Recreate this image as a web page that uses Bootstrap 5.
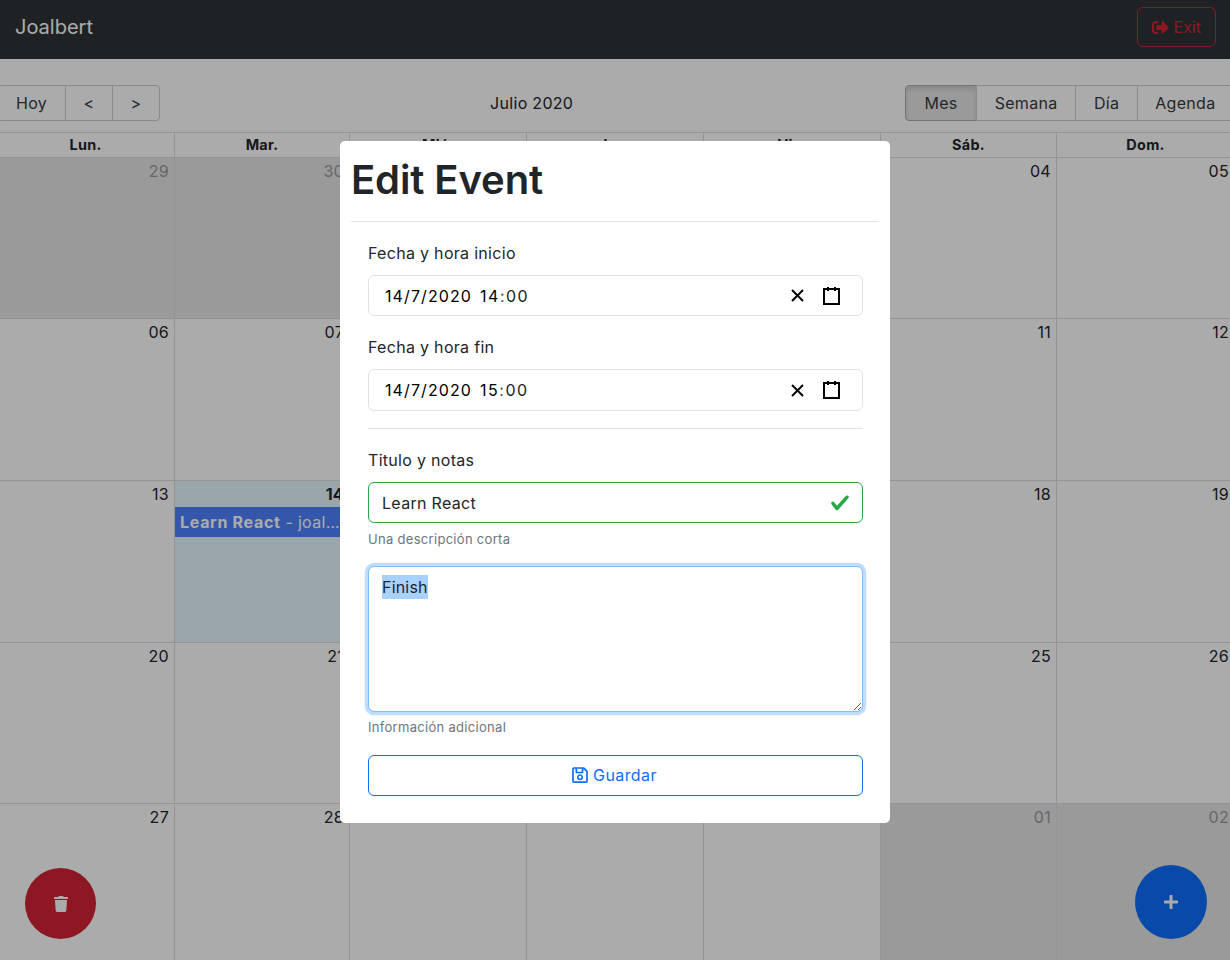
<!DOCTYPE html>
<html lang="es">
<head>
  <meta charset="UTF-8" />
  <meta name="viewport" content="width=device-width, initial-scale=1" />
  <title>Joalbert Calendar</title>
  <link href="https://cdn.jsdelivr.net/npm/bootstrap@5.3.0/dist/css/bootstrap.min.css" rel="stylesheet" />
  <style>
    html, body { height: 100%; overflow: hidden; }
    body { font-family: Inter, "Liberation Sans", sans-serif; font-size: 16px; letter-spacing: .3px; color: #212529; background: #fff; }

    /* top bar */
    .app-bar { height: 59px; background: #2e3338; padding: 7px 14px 12px 15px; }
    .app-brand { font-size: 20px; line-height: 40px; color: #fff; letter-spacing: 0; }
    .exit-btn { width: 79px; height: 40px; padding: 0; color: #d32535; border-color: #d32535; font-size: 16px; }
    .exit-btn svg { width: 17px; height: 17px; fill: currentColor; vertical-align: -3px; }

    /* calendar */
    .cal-shell { margin: 0 -4px 0 -3px; }
    .cal-toolbar { height: 73px; padding: 26px 0 11px 0; }
    .cal-label { color: #212529; padding-right: 2px; }
    .tool-group { display: flex; }
    .tool-btn { height: 36px; padding: 0 17.5px; border: 1px solid #ccc; margin-left: -1px; color: #373a3c; line-height: 34px; background: #fff; }
    .tool-btn:first-child { border-radius: 4px 0 0 4px; margin-left: 0; }
    .tool-btn:last-child { border-radius: 0 4px 4px 0; }
    .tool-btn.today-btn, .tool-btn.wide-btn { padding: 0 18px; }
    .tool-btn.is-on { background: #e6e6e6; border-color: #adadad; box-shadow: inset 0 3px 5px rgba(0,0,0,.125); }
    .cal-grid { border-top: 1px solid #ddd; }
    .cal-head, .cal-week { display: grid; grid-template-columns: 177px 175px 177px 177px 177px 176px 1fr; }
    .cal-head > div { height: 25px; line-height: 24px; font-size: 14.4px; font-weight: 700; text-align: center; border-bottom: 1px solid #ddd; border-left: 1px solid #ddd; }
    .cal-head > div:first-child, .cal-day:first-child { border-left: 0; }
    .cal-week { height: 162px; border-bottom: 1px solid #ddd; }
    .cal-week:nth-child(2), .cal-week:nth-child(5) { height: 161px; }
    .cal-day { border-left: 1px solid #ddd; padding: 1px 5px 0 0; text-align: right; min-width: 0; }
    .cal-day.off { background: #e6e6e6; color: #999; }
    .cal-day.today { background: #e8f8ff; font-weight: 700; }
    .cal-event { margin: 1px -2px 0 0; padding: 3px 5px; height: 30px; background: #4f82ff; color: #fff; text-align: left; font-weight: 400; white-space: nowrap; overflow: hidden; text-overflow: ellipsis; }
    .cal-event strong { letter-spacing: .7px; }

    /* floating buttons */
    .fab-btn { width: 72px; height: 72px; border-radius: 50%; border: 0; color: #fff; z-index: 5; }
    .fab-del { left: 25px; bottom: 21px; background: #d32535; width: 71px; height: 71px; }
    .fab-add { right: 23px; bottom: 21px; background: #0d6efd; height: 74px; }
    .fab-btn svg { width: 14px; height: 16px; fill: currentColor; }

    /* modal */
    .dim-layer { background: rgba(0,0,0,.33); padding-top: 4px; z-index: 10; }
    .edit-box { width: 550px; height: 682px; background: #fff; border-radius: 5px; padding: 11px; }
    .edit-box h1 { font-size: 40px; font-weight: 600; letter-spacing: -.1px; line-height: 48px; margin: 4px 0 0; padding-bottom: 17px; border-bottom: 1px solid #e3e3e3; color: #212529; }
    .edit-form { padding: 19px 16px 0 17px; }
    .edit-form label { display: block; line-height: 24px; margin-bottom: 10px; }
    .date-field { height: 41px; padding: 0 21px 0 16px; display: flex; align-items: center; justify-content: space-between; color: #000; letter-spacing: 1.1px; }
    .date-field .time-part { margin-left: 2px; letter-spacing: 1.5px; }
    .date-field .dim { color: #555; }
    .date-field .min-part { color: #222; }
    .date-tools { display: flex; align-items: center; gap: 15px; }
    .date-tools svg { display: block; stroke: #000; stroke-width: 2; fill: none; }
    .gap-field { margin-top: 19px; }
    .second-date { height: 42px; }
    .form-rule { border-top: 1px solid #e3e3e3; margin: 17px 0 19px; }
    .form-control.title-ok { height: 41px; padding-left: 13px; border-color: #28a745; color: #212529; letter-spacing: .3px;
      background-image: url("data:image/svg+xml,%3csvg xmlns='http://www.w3.org/2000/svg' viewBox='0 0 8 8'%3e%3cpath fill='%2328a745' d='M2.3 6.73L.6 4.53c-.4-1.04.46-1.4 1.1-.8l1.1 1.4 3.4-3.8c.6-.63 1.6-.27 1.2.7l-4 4.6c-.43.5-.8.4-1.1.1z'/%3e%3c/svg%3e");
      background-size: 20px 20px; background-position: right 12px center; background-repeat: no-repeat; }
    .hint-text { font-size: 13px; line-height: 19px; color: #6c757d; margin-top: 7px; }
    .note-area { height: 146px; margin-top: 17px; padding: 8px 13px; color: #000; letter-spacing: .2px; }
    .note-area:focus { border-color: #80bdff; box-shadow: 0 0 0 3.2px rgba(0,123,255,.25); }
    .note-area::selection { background: #a8d1ff; }
    .note-hint { margin-top: 6px; }
    .save-btn { height: 41px; margin-top: 18px; padding: 0 2px 2px 0; letter-spacing: .4px; }
    .save-btn svg { width: 16px; height: 18px; fill: currentColor; vertical-align: -3px; }
  </style>
</head>
<body>
  <nav class="app-bar d-flex justify-content-between">
    <span class="app-brand">Joalbert</span>
    <button class="btn exit-btn">
      <svg viewBox="0 0 512 512"><path d="M497 273L329 441c-15 15-41 4.5-41-17v-96H152c-13.3 0-24-10.7-24-24v-96c0-13.3 10.7-24 24-24h136V88c0-21.4 25.9-32 41-17l168 168c9.3 9.4 9.3 24.6 0 34zM192 436v-40c0-6.6-5.4-12-12-12H96c-17.7 0-32-14.3-32-32V160c0-17.7 14.3-32 32-32h84c6.6 0 12-5.4 12-12V76c0-6.6-5.4-12-12-12H96c-53 0-96 43-96 96v192c0 53 43 96 96 96h84c6.6 0 12-5.4 12-12z"/></svg>
      Exit
    </button>
  </nav>

  <div class="cal-shell">
    <div class="cal-toolbar d-flex align-items-center">
      <div class="tool-group">
        <span class="tool-btn today-btn">Hoy</span>
        <span class="tool-btn">&lt;</span>
        <span class="tool-btn">&gt;</span>
      </div>
      <div class="cal-label flex-grow-1 text-center">Julio 2020</div>
      <div class="tool-group">
        <span class="tool-btn wide-btn is-on">Mes</span>
        <span class="tool-btn wide-btn">Semana</span>
        <span class="tool-btn">Día</span>
        <span class="tool-btn">Agenda</span>
      </div>
    </div>

    <div class="cal-grid">
      <div class="cal-head">
        <div>Lun.</div><div>Mar.</div><div>Mié.</div><div>Jue.</div><div>Vie.</div><div>Sáb.</div><div>Dom.</div>
      </div>
      <div class="cal-week">
        <div class="cal-day off">29</div><div class="cal-day off">30</div><div class="cal-day">01</div><div class="cal-day">02</div><div class="cal-day">03</div><div class="cal-day">04</div><div class="cal-day">05</div>
      </div>
      <div class="cal-week">
        <div class="cal-day">06</div><div class="cal-day">07</div><div class="cal-day">08</div><div class="cal-day">09</div><div class="cal-day">10</div><div class="cal-day">11</div><div class="cal-day">12</div>
      </div>
      <div class="cal-week">
        <div class="cal-day">13</div>
        <div class="cal-day today">14<div class="cal-event"><strong>Learn React</strong> - joalbert</div></div>
        <div class="cal-day">15</div><div class="cal-day">16</div><div class="cal-day">17</div><div class="cal-day">18</div><div class="cal-day">19</div>
      </div>
      <div class="cal-week">
        <div class="cal-day">20</div><div class="cal-day">21</div><div class="cal-day">22</div><div class="cal-day">23</div><div class="cal-day">24</div><div class="cal-day">25</div><div class="cal-day">26</div>
      </div>
      <div class="cal-week">
        <div class="cal-day">27</div><div class="cal-day">28</div><div class="cal-day">29</div><div class="cal-day">30</div><div class="cal-day">31</div><div class="cal-day off">01</div><div class="cal-day off">02</div>
      </div>
    </div>
  </div>

  <button class="fab-btn fab-del position-fixed d-flex align-items-center justify-content-center">
    <svg viewBox="0 0 448 512"><path d="M432 32H312l-9.4-18.7A24 24 0 0 0 281.1 0H166.8a23.72 23.72 0 0 0-21.4 13.3L136 32H16A16 16 0 0 0 0 48v32a16 16 0 0 0 16 16h416a16 16 0 0 0 16-16V48a16 16 0 0 0-16-16zM53.2 467a48 48 0 0 0 47.9 45h245.8a48 48 0 0 0 47.9-45L416 128H32z"/></svg>
  </button>
  <button class="fab-btn fab-add position-fixed d-flex align-items-center justify-content-center">
    <svg viewBox="0 0 448 512"><path d="M416 208H272V64c0-17.67-14.33-32-32-32h-32c-17.67 0-32 14.33-32 32v144H32c-17.67 0-32 14.33-32 32v32c0 17.67 14.33 32 32 32h144v144c0 17.67 14.33 32 32 32h32c17.67 0 32-14.33 32-32V304h144c17.67 0 32-14.33 32-32v-32c0-17.67-14.33-32-32-32z"/></svg>
  </button>

  <div class="dim-layer position-fixed top-0 start-0 w-100 h-100 d-flex align-items-center justify-content-center">
    <div class="edit-box">
      <h1>Edit Event</h1>
      <form class="edit-form" onsubmit="return false">
        <label>Fecha y hora inicio</label>
        <div class="form-control date-field">
          <span>14/7/2020<span class="time-part">&nbsp;14<span class="dim">:</span><span class="min-part">00</span></span></span>
          <span class="date-tools">
            <svg width="19" height="19" viewBox="0 0 19 19"><line x1="4" x2="15" y1="4" y2="15"/><line x1="15" x2="4" y1="4" y2="15"/></svg>
            <svg width="19" height="20" viewBox="0 0 19 20"><rect width="15" height="15" x="2" y="3"/><line x1="6" x2="6" y1="1" y2="5"/><line x1="13" x2="13" y1="1" y2="5"/></svg>
          </span>
        </div>

        <label class="gap-field">Fecha y hora fin</label>
        <div class="form-control date-field second-date">
          <span>14/7/2020<span class="time-part">&nbsp;15<span class="dim">:</span><span class="min-part">00</span></span></span>
          <span class="date-tools">
            <svg width="19" height="19" viewBox="0 0 19 19"><line x1="4" x2="15" y1="4" y2="15"/><line x1="15" x2="4" y1="4" y2="15"/></svg>
            <svg width="19" height="20" viewBox="0 0 19 20"><rect width="15" height="15" x="2" y="3"/><line x1="6" x2="6" y1="1" y2="5"/><line x1="13" x2="13" y1="1" y2="5"/></svg>
          </span>
        </div>

        <div class="form-rule"></div>

        <label>Titulo y notas</label>
        <input type="text" class="form-control title-ok" value="Learn React" />
        <div class="hint-text">Una descripción corta</div>

        <textarea id="notes" class="form-control note-area">Finish</textarea>
        <div class="hint-text note-hint">Información adicional</div>

        <button class="btn btn-outline-primary w-100 save-btn">
          <svg viewBox="0 0 448 512"><path d="M433.941 129.941l-83.882-83.882A48 48 0 0 0 316.118 32H48C21.49 32 0 53.49 0 80v352c0 26.51 21.49 48 48 48h352c26.51 0 48-21.49 48-48V163.882a48 48 0 0 0-14.059-33.941zM272 80v80H144V80h128zm122 352H54a6 6 0 0 1-6-6V86a6 6 0 0 1 6-6h42v104c0 13.255 10.745 24 24 24h176c13.255 0 24-10.745 24-24V83.882l78.243 78.243a6 6 0 0 1 1.757 4.243V426a6 6 0 0 1-6 6zM224 232c-48.523 0-88 39.477-88 88s39.477 88 88 88 88-39.477 88-88-39.477-88-88-88zm0 128c-22.056 0-40-17.944-40-40s17.944-40 40-40 40 17.944 40 40-17.944 40-40 40z"/></svg>
          Guardar
        </button>
      </form>
    </div>
  </div>

  <script src="https://cdn.jsdelivr.net/npm/bootstrap@5.3.0/dist/js/bootstrap.bundle.min.js"></script>
  <script>
    // the note is open with its text selected
    const notes = document.getElementById('notes');
    notes.focus();
    notes.setSelectionRange(0, notes.value.length);
  </script>
</body>
</html>
